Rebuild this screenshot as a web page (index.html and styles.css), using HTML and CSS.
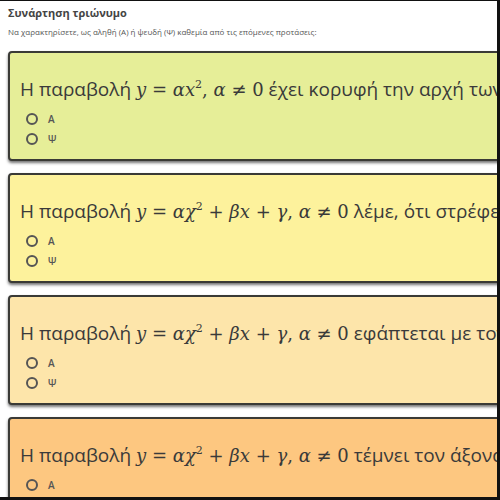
FILE: index.html
```html
<!DOCTYPE html>
<html lang="el">
<head>
<meta charset="utf-8">
<link rel="stylesheet" href="styles.css">
</head>
<body>
<div class="frame">
  <h1 class="title">Συνάρτηση τριώνυμο</h1>
  <p class="intro">Να χαρακτηρίσετε, ως αληθή (Α) ή ψευδή (Ψ) καθεμία από τις επόμενες προτάσεις:</p>
  <div class="cards">
    <div class="card c1">
      <div class="q">Η παραβολή <span class="m"><i>y</i> = <i>αx</i><sup>2</sup>, <i>α</i> ≠ 0</span> έχει κορυφή την αρχή των αξόνων.</div>
      <div class="opts">
        <div class="opt"><span class="radio"></span><span class="lbl">Α</span></div>
        <div class="opt"><span class="radio"></span><span class="lbl">Ψ</span></div>
      </div>
    </div>
    <div class="card c2">
      <div class="q">Η παραβολή <span class="m"><i>y</i> = <i>αχ</i><sup>2</sup> + <i>βx</i> + <i>γ</i>, <i>α</i> ≠ 0</span> λέμε, ότι στρέφει τα κοίλα προς τα πάνω.</div>
      <div class="opts">
        <div class="opt"><span class="radio"></span><span class="lbl">Α</span></div>
        <div class="opt"><span class="radio"></span><span class="lbl">Ψ</span></div>
      </div>
    </div>
    <div class="card c3">
      <div class="q">Η παραβολή <span class="m"><i>y</i> = <i>αχ</i><sup>2</sup> + <i>βx</i> + <i>γ</i>, <i>α</i> ≠ 0</span> εφάπτεται με τον άξονα x'x.</div>
      <div class="opts">
        <div class="opt"><span class="radio"></span><span class="lbl">Α</span></div>
        <div class="opt"><span class="radio"></span><span class="lbl">Ψ</span></div>
      </div>
    </div>
    <div class="card c4">
      <div class="q">Η παραβολή <span class="m"><i>y</i> = <i>αχ</i><sup>2</sup> + <i>βx</i> + <i>γ</i>, <i>α</i> ≠ 0</span> τέμνει τον άξονα y'y.</div>
      <div class="opts">
        <div class="opt"><span class="radio"></span><span class="lbl">Α</span></div>
        <div class="opt"><span class="radio"></span><span class="lbl">Ψ</span></div>
      </div>
    </div>
  </div>
</div>
</body>
</html>
```
FILE: styles.css
```css
html, body {
  margin: 0;
  padding: 0;
  background: #fff;
}
.frame {
  box-sizing: border-box;
  width: 500px;
  height: 500px;
  overflow: hidden;
  border-top: 1px solid #111;
  border-right: 3px solid #111;
  border-bottom: 3px solid #111;
  font-family: "Open Sans", "Noto Sans", sans-serif;
  color: #333;
}
.title {
  margin: 5px 0 0 8px;
  font-size: 11px;
  font-weight: 700;
  line-height: 14px;
  color: #444;
}
.intro {
  margin: 6px 0 0 8px;
  font-size: 8px;
  line-height: 12px;
  color: #555;
}
.cards {
  margin-top: 13px;
  display: flex;
  flex-direction: column;
  gap: 12px;
  padding-left: 8px;
}
.card {
  width: 560px;
  height: 110px;
  box-sizing: border-box;
  border: 2px solid #3a3a36;
  border-radius: 4px;
  box-shadow: 0 2px 3px rgba(0,0,0,0.55);
  padding: 22px 0 0 10px;
}
.c1 { background: #e6ee98; }
.c2 { background: #fdf29c; }
.c3 { background: #fde5aa; }
.c4 { background: #fdc780; }
.q {
  font-size: 19px;
  line-height: 28px;
  white-space: nowrap;
  color: #3a3a3a;
}
.m {
  font-family: "DejaVu Serif", "Liberation Serif", serif;
  font-size: 18px;
}
.m sup {
  font-size: 11px;
  vertical-align: 8px;
  line-height: 0;
}
.opts {
  margin-top: 5px;
  display: flex;
  flex-direction: column;
}
.opt {
  display: flex;
  align-items: center;
  height: 20px;
  padding-left: 6px;
}
.radio {
  width: 8px;
  height: 8px;
  border: 2px solid #555;
  border-radius: 50%;
}
.lbl {
  margin-left: 10px;
  font-size: 10px;
  font-weight: 600;
  color: #555;
}
```
